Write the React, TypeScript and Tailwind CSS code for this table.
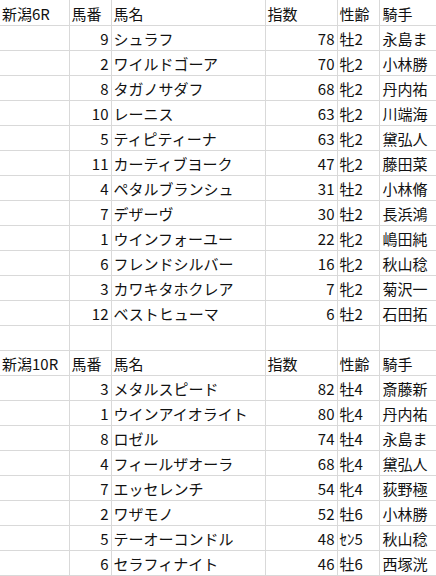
import React from "react";

type Horse = [number, string, number, string, string];

const race6: Horse[] = [
  [9, "シュラフ", 78, "牡2", "永島ま"],
  [2, "ワイルドゴーア", 70, "牝2", "小林勝"],
  [8, "タガノサダフ", 68, "牝2", "丹内祐"],
  [10, "レーニス", 63, "牝2", "川端海"],
  [5, "ティピティーナ", 63, "牝2", "黛弘人"],
  [11, "カーティブヨーク", 47, "牝2", "藤田菜"],
  [4, "ペタルブランシュ", 31, "牡2", "小林脩"],
  [7, "デザーヴ", 30, "牡2", "長浜鴻"],
  [1, "ウインフォーユー", 22, "牝2", "嶋田純"],
  [6, "フレンドシルバー", 16, "牝2", "秋山稔"],
  [3, "カワキタホクレア", 7, "牝2", "菊沢一"],
  [12, "ベストヒューマ", 6, "牡2", "石田拓"],
];

const race10: Horse[] = [
  [3, "メタルスピード", 82, "牡4", "斎藤新"],
  [1, "ウインアイオライト", 80, "牝4", "丹内祐"],
  [8, "ロゼル", 74, "牡4", "永島ま"],
  [4, "フィールザオーラ", 68, "牝4", "黛弘人"],
  [7, "エッセレンチ", 54, "牝4", "荻野極"],
  [2, "ワザモノ", 52, "牡6", "小林勝"],
  [5, "テーオーコンドル", 48, "ｾﾝ5", "秋山稔"],
  [6, "セラフィナイト", 46, "牡6", "西塚洸"],
];

const cell =
  "h-[25px] border-r border-b border-[#d9d9d9] px-[2px] pb-[1px] align-bottom whitespace-nowrap overflow-hidden";

const Header = ({ race }: { race: string }) => (
  <tr>
    <td className={cell}>{race}</td>
    <td className={cell}>馬番</td>
    <td className={cell}>馬名</td>
    <td className={cell}>指数</td>
    <td className={cell}>性齢</td>
    <td className={`${cell} border-r-0 pl-[3px]`}>騎手</td>
  </tr>
);

const Rows = ({ horses }: { horses: Horse[] }) => (
  <>
    {horses.map(([no, name, idx, sex, jockey]) => (
      <tr key={name}>
        <td className={cell}></td>
        <td className={`${cell} text-right`}>{no}</td>
        <td className={cell}>{name}</td>
        <td className={`${cell} text-right`}>{idx}</td>
        <td className={cell}>{sex}</td>
        <td className={`${cell} border-r-0 pl-[3px]`}>{jockey}</td>
      </tr>
    ))}
  </>
);

const App = () => {
  return (
    <div className="w-[436px] h-[576px] overflow-hidden bg-white text-[#111] font-['Noto_Sans_CJK_JP',sans-serif] text-[15px] leading-[20px]">
      <table className="table-fixed border-collapse w-[436px]">
        <colgroup>
          <col className="w-[69px]" />
          <col className="w-[42px]" />
          <col className="w-[154px]" />
          <col className="w-[72px]" />
          <col className="w-[42px]" />
          <col className="w-[57px]" />
        </colgroup>
        <tbody>
          <Header race="新潟6R" />
          <Rows horses={race6} />
          <tr>
            <td className={cell}></td>
            <td className={cell}></td>
            <td className={cell}></td>
            <td className={cell}></td>
            <td className={cell}></td>
            <td className={`${cell} border-r-0`}></td>
          </tr>
          <Header race="新潟10R" />
          <Rows horses={race10} />
        </tbody>
      </table>
    </div>
  );
};

export default App;
